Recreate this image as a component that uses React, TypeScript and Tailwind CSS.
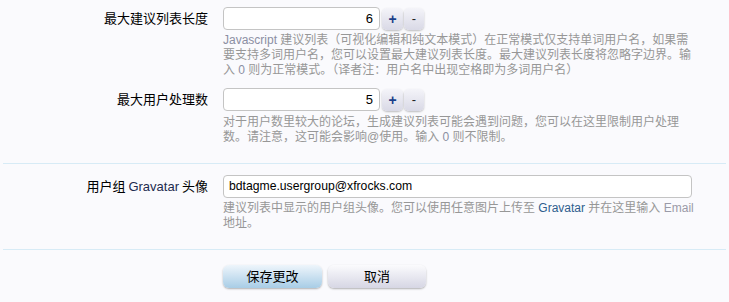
import React from "react";

const FONT = {
  fontFamily: '"Liberation Sans", "Noto Sans CJK SC", sans-serif',
};

function Spin() {
  return (
    <div className="flex items-center gap-[1px] ml-[2px]">
      <div className="w-[21px] h-[22px] rounded-[5px] bg-gradient-to-b from-[#f4f4f9] to-[#d9d9e6] shadow-[0_1px_2px_rgba(0,0,0,0.25)] flex items-center justify-center text-[14px] font-bold text-[#1b3f8a] leading-none">
        +
      </div>
      <div className="w-[20px] h-[22px] rounded-[5px] bg-gradient-to-b from-[#f4f4f9] to-[#d9d9e6] shadow-[0_1px_2px_rgba(0,0,0,0.25)] flex items-center justify-center text-[13px] text-[#222] leading-none">
        -
      </div>
    </div>
  );
}

function Label({ children }: { children: React.ReactNode }) {
  return (
    <div className="w-[208px] shrink-0 text-right text-[13px] text-black h-[23px] flex items-center justify-end">
      {children}
    </div>
  );
}

export default function App() {
  return (
    <div className="w-[729px] h-[302px] bg-[#fafafd] overflow-hidden" style={FONT}>
      {/* Row 1 */}
      <div className="flex pt-[7px]">
        <Label>最大建议列表长度</Label>
        <div className="ml-[15px]">
          <div className="flex items-center">
            <div className="w-[157px] h-[23px] bg-white border border-[#c4c4c4] rounded-[4px] flex items-center justify-end pr-[6px] text-[13px] text-black">
              6
            </div>
            <Spin />
          </div>
          <div className="mt-[3px] text-[12px] leading-[15px] text-[#979797] whitespace-nowrap">
            <span className="text-[#8b8fa3]">Javascript</span> 建议列表（可视化编辑和纯文本模式）在正常模式仅支持单词用户名，如果需
            <br />
            要支持多词用户名，您可以设置最大建议列表长度。最大建议列表长度将忽略字边界。输
            <br />
            入 <span className="text-[#8b8fa3]">0</span> 则为正常模式。（译者注：用户名中出现空格即为多词用户名）
          </div>
        </div>
      </div>

      {/* Row 2 */}
      <div className="mx-[3px] border-b border-[#d7ebf6] pb-[18px]">
        <div className="flex pt-[10px] -ml-[3px]">
          <Label>最大用户处理数</Label>
          <div className="ml-[15px]">
            <div className="flex items-center">
              <div className="w-[157px] h-[23px] bg-white border border-[#c4c4c4] rounded-[4px] flex items-center justify-end pr-[6px] text-[13px] text-black">
                5
              </div>
              <Spin />
            </div>
            <div className="mt-[4px] text-[12px] leading-[15px] text-[#979797] whitespace-nowrap">
              对于用户数里较大的论坛，生成建议列表可能会遇到问题，您可以在这里限制用户处理
              <br />
              数。请注意，这可能会影响@使用。输入 <span className="text-[#8b8fa3]">0</span> 则不限制。
            </div>
          </div>
        </div>
      </div>

      {/* Row 3 */}
      <div className="mx-[3px] border-b border-[#d7ebf6] pb-[18px]">
        <div className="flex pt-[11px] -ml-[3px]">
          <Label>
            用户组 <span className="text-[#1d2b4f] mx-[3px]">Gravatar</span> 头像
          </Label>
          <div className="ml-[15px]">
            <div className="w-[469px] h-[23px] bg-white border border-[#c4c4c4] rounded-[4px] flex items-center pl-[5px] text-[12.2px] text-black">
              bdtagme.usergroup@xfrocks.com
            </div>
            <div className="mt-[3px] text-[12px] leading-[15px] text-[#979797] whitespace-nowrap">
              建议列表中显示的用户组头像。您可以使用任意图片上传至 <span className="text-[#2f5e8e]">Gravatar</span> 并在这里输入 <span className="text-[#9a9aa8]">Email</span>
              <br />
              地址。
            </div>
          </div>
        </div>
      </div>

      {/* Buttons */}
      <div className="flex pt-[15px] pl-[223px] gap-[6px]">
        <div className="w-[99px] h-[23px] rounded-[6px] bg-gradient-to-b from-[#eef5fb] to-[#a8cde6] shadow-[0_1px_2px_rgba(0,0,0,0.3)] flex items-center justify-center text-[13px] text-black">
          保存更改
        </div>
        <div className="w-[98px] h-[23px] rounded-[6px] bg-gradient-to-b from-[#fbfbfd] to-[#d6d6e4] shadow-[0_1px_2px_rgba(0,0,0,0.3)] flex items-center justify-center text-[13px] text-black">
          取消
        </div>
      </div>
    </div>
  );
}
